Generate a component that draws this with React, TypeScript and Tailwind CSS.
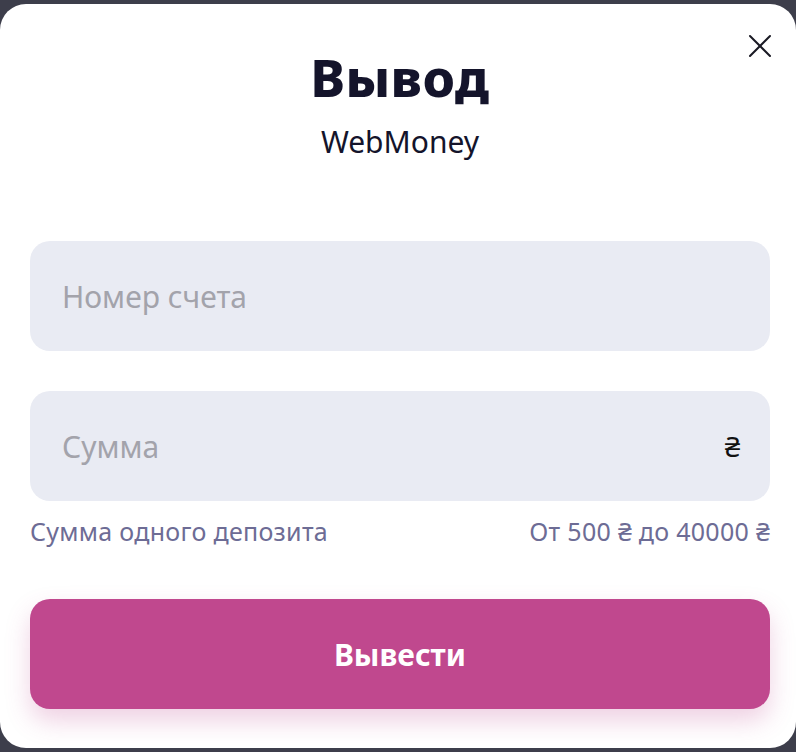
import { X } from 'lucide-react';

function Field({ placeholder, suffix }: { placeholder: string; suffix?: string }) {
    return (
        <div className='h-[110px] rounded-[20px] bg-[#e9ebf3] flex items-center justify-between pl-[32px] pr-[30px]'>
            <span className='text-[30px] text-[#a3a3ab]'>{placeholder}</span>
            {suffix && <span className='text-[28px] text-[#111]'>{suffix}</span>}
        </div>
    )
}

export default function App() {
    return (
        <div className='h-[752px] bg-[#3d3e4b] py-[4px]' style={{ fontFamily: '"Noto Sans", sans-serif' }}>
            <div className='relative h-full bg-white rounded-[26px] pl-[30px] pr-[26px] flex flex-col'>
                <button className='absolute right-[16px] top-[22px] text-[#1a1a24]'>
                    <X size={40} strokeWidth={1.2} />
                </button>

                <h1 className='mt-[43px] text-center text-[52px] leading-[60px] font-extrabold text-[#14142b] tracking-[0.5px]'>Вывод</h1>
                <p className='mt-[17px] text-center text-[30px] leading-[36px] text-[#14142b]'>WebMoney</p>

                <div className='mt-[81px] flex flex-col gap-[40px]'>
                    <Field placeholder='Номер счета' />
                    <Field placeholder='Сумма' suffix='₴' />
                </div>

                <div className='mt-[15px] flex justify-between text-[25px] leading-[30px] text-[#6d6c95] tracking-[0.3px]'>
                    <span>Сумма одного депозита</span>
                    <span>От 500 ₴ до 40000 ₴</span>
                </div>

                <button className='mt-[53px] h-[110px] rounded-[20px] bg-[#c0488e] text-white text-[30px] font-bold shadow-[0_12px_24px_rgba(192,72,142,0.25)]'>
                    Вывести
                </button>
            </div>
        </div>
    )
}
